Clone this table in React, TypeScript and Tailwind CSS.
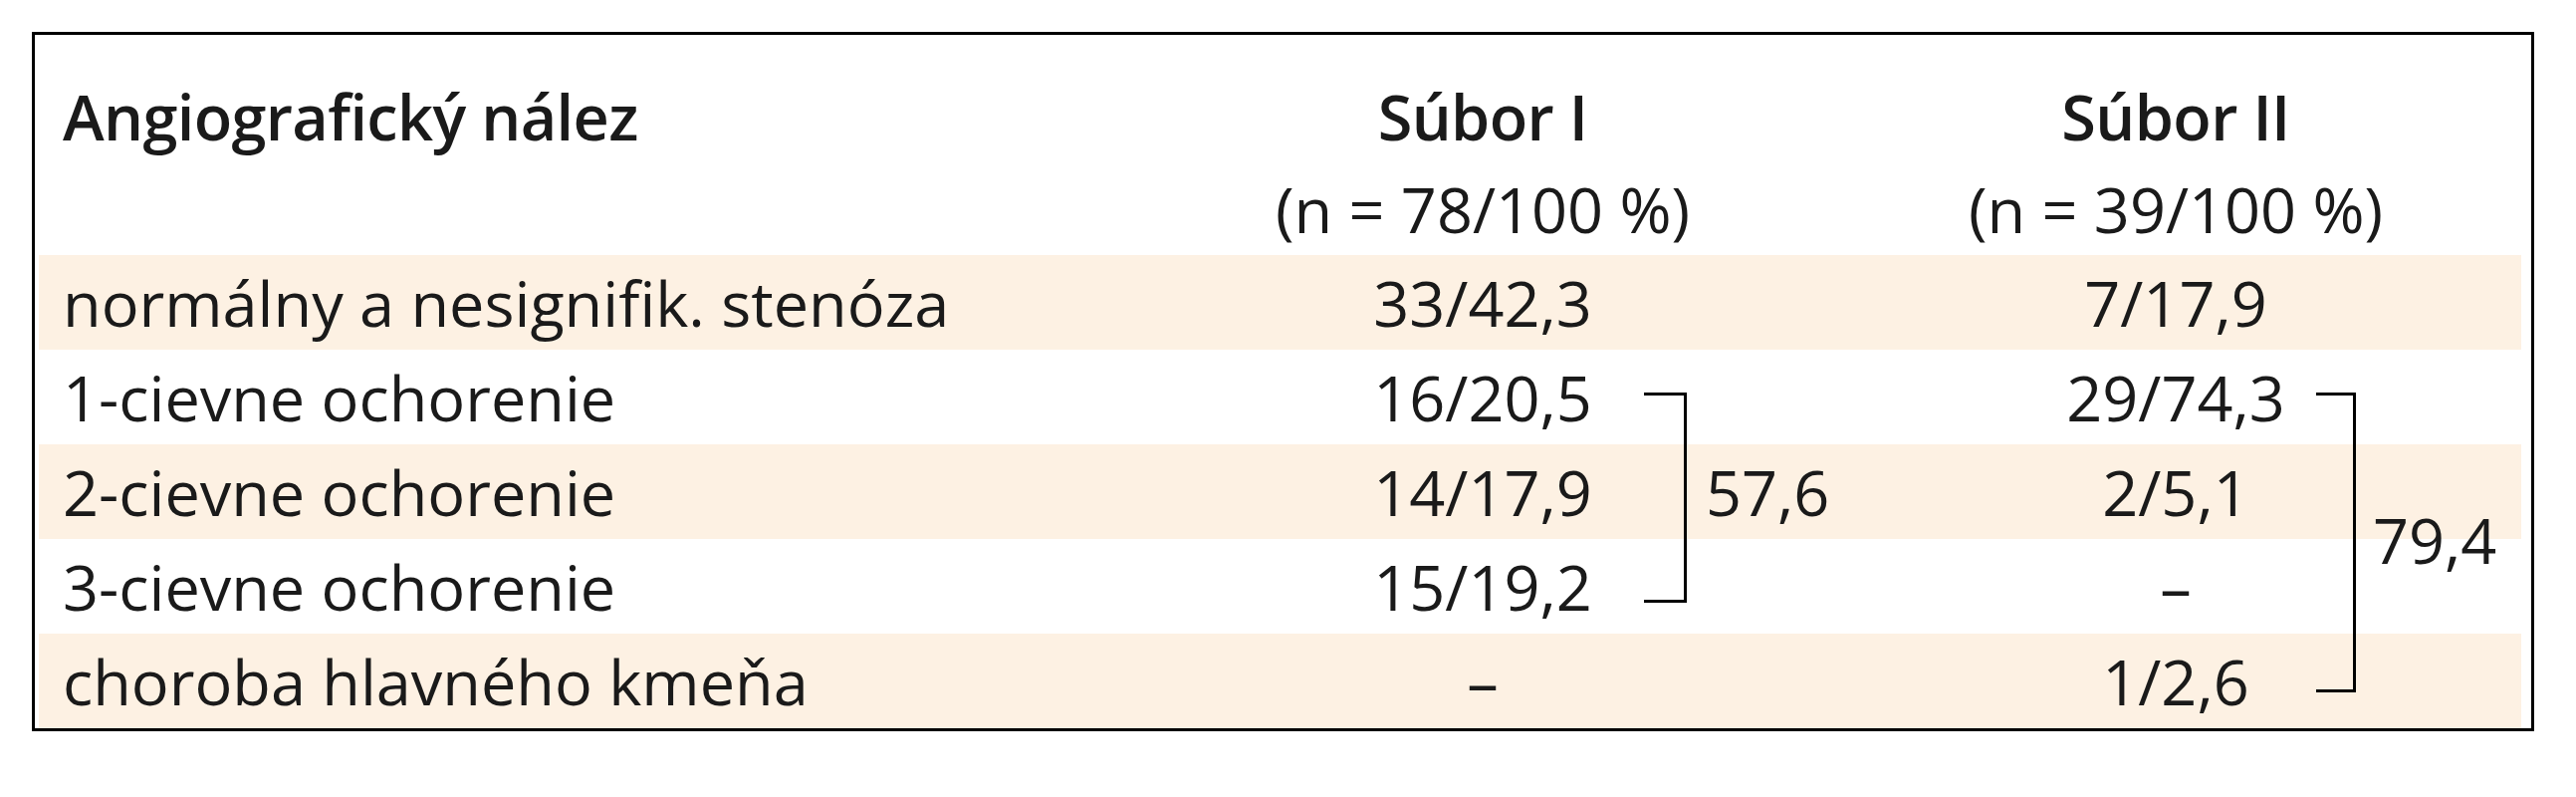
import React from "react"

const font = { fontFamily: '"Open Sans", "Noto Sans", sans-serif' }

interface Row {
  label: string
  s1: string
  s2: string
  shaded: boolean
}

const rows: Row[] = [
  { label: "normálny a nesignifik. stenóza", s1: "33/42,3", s2: "7/17,9", shaded: true },
  { label: "1-cievne ochorenie", s1: "16/20,5", s2: "29/74,3", shaded: false },
  { label: "2-cievne ochorenie", s1: "14/17,9", s2: "2/5,1", shaded: true },
  { label: "3-cievne ochorenie", s1: "15/19,2", s2: "–", shaded: false },
  { label: "choroba hlavného kmeňa", s1: "–", s2: "1/2,6", shaded: true },
]

export default function App() {
  return (
    <div className="min-h-[800px] w-[2587px] bg-white p-[32px] text-[#1a1a1a]" style={font}>
      <div className="w-[2513px] border-[3px] border-black pl-[4px] pr-[9px] pt-[35px]">
        <div className="grid grid-cols-[1211px_401px_43px_206px_426px_40px_166px] grid-rows-[93px_93px_95px_95px_95px_95px_95px] text-[63px] leading-[95px]">
          {/* header */}
          <div className="col-start-1 row-start-1 whitespace-nowrap pl-[24px] font-semibold leading-[93px] tracking-[-0.01em]">
            Angiografický nález
          </div>
          <div className="col-start-2 row-start-1 flex justify-center whitespace-nowrap pl-[77px] font-semibold leading-[93px] tracking-[-0.01em]">
            Súbor I
          </div>
          <div className="col-start-5 row-start-1 flex justify-center whitespace-nowrap pl-[144px] font-semibold leading-[93px] tracking-[-0.01em]">
            Súbor II
          </div>
          <div className="col-start-2 row-start-2 flex justify-center whitespace-nowrap pl-[77px] leading-[93px]">
            (n = 78/100 %)
          </div>
          <div className="col-start-5 row-start-2 flex justify-center whitespace-nowrap pl-[144px] leading-[93px]">
            (n = 39/100 %)
          </div>

          {/* row bands */}
          {rows.map((r, i) => (
            <div
              key={"bg" + i}
              className={`col-span-full col-start-1 ${r.shaded ? "bg-[#fdf1e3]" : "bg-white"}`}
              style={{ gridRowStart: i + 3 }}
            />
          ))}

          {/* cells */}
          {rows.map((r, i) => (
            <React.Fragment key={i}>
              <div className="col-start-1 whitespace-nowrap pl-[24px]" style={{ gridRowStart: i + 3 }}>
                {r.label}
              </div>
              <div className="col-start-2 flex justify-center whitespace-nowrap pl-[77px]" style={{ gridRowStart: i + 3 }}>
                {r.s1}
              </div>
              <div className="col-start-5 flex justify-center whitespace-nowrap pl-[144px]" style={{ gridRowStart: i + 3 }}>
                {r.s2}
              </div>
            </React.Fragment>
          ))}

          {/* bracket Súbor I: rows 2-4 */}
          <div className="col-start-3 row-start-4 row-end-7 mt-[43px] mb-[31px] border-y-[3px] border-r-[3px] border-black" />
          <div className="col-start-4 row-start-4 row-end-7 flex items-center whitespace-nowrap pl-[19px]">57,6</div>

          {/* bracket Súbor II: rows 2-5 */}
          <div className="col-start-6 row-start-4 row-end-8 mt-[43px] mb-[36px] border-y-[3px] border-r-[3px] border-black" />
          <div className="col-start-7 row-start-4 row-end-8 flex items-center whitespace-nowrap pl-[17px]">79,4</div>
        </div>
      </div>
    </div>
  )
}
